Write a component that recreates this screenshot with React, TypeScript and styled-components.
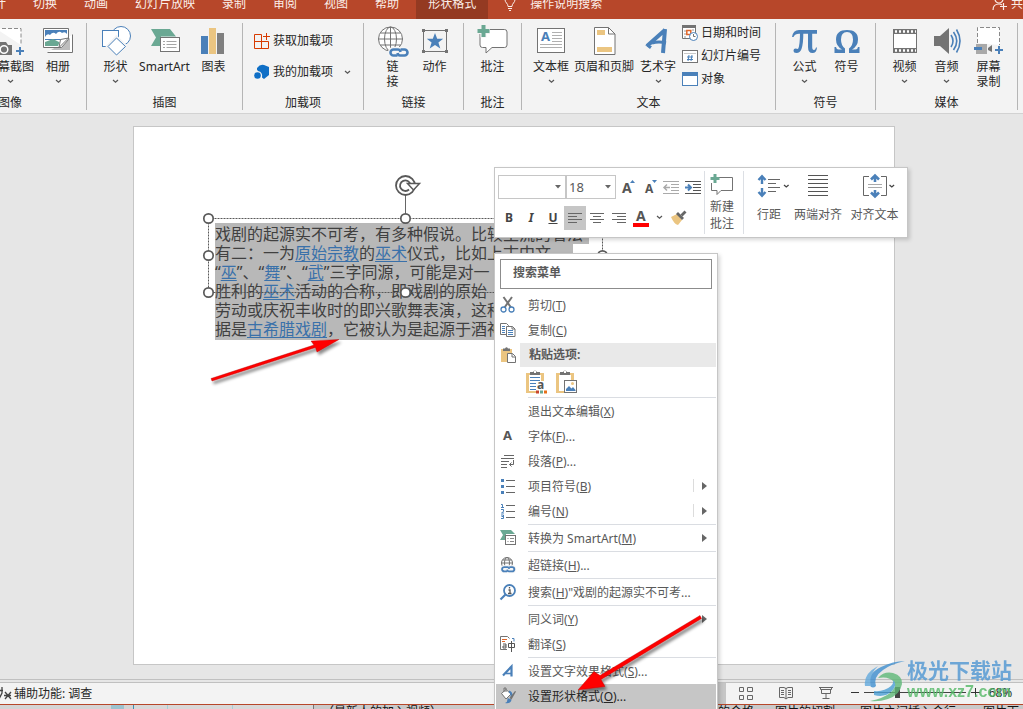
import React from "react";
import styled, { createGlobalStyle, css } from "styled-components";

const BLUE = "#4a80b9";
const GREY = "#737373";
const GREEN = "#6aa893";
const SAND = "#ebc581";

const GlobalStyle = createGlobalStyle`
  * { box-sizing: border-box; }
  body {
    margin: 0;
    overflow: hidden;
    font-family: "Noto Sans", "Noto Sans CJK SC", sans-serif;
    font-size: 12px;
    color: #262626;
  }
  button, input, select { font: inherit; color: inherit; }
  button { border: 0; padding: 0; background: none; }
  svg { display: block; flex: none; overflow: visible; }
`;

const Window = styled.div`
  position: relative;
  display: flex;
  flex-direction: column;
  height: 100vh;
  overflow: hidden;
  background: #e6e6e6;
`;

/* ---------- Tab strip ---------- */

const TabStrip = styled.nav`
  display: flex;
  align-items: flex-end;
  gap: 27px;
  height: 19px;
  flex: none;
  margin-left: -18px;
  overflow: hidden;
  white-space: nowrap;
  background: #b7472a;
`;

const Tab = styled.button<{ $active?: boolean }>`
  display: flex;
  align-items: center;
  gap: 14px;
  height: 32px;
  flex: none;
  color: #fbeee9;
  ${(p) =>
    p.$active &&
    css`
      margin: 0 -11px 0 -10px;
      padding: 0 12px;
      background: #943a22;
    `}
`;

const ShareTab = styled(Tab)`
  gap: 4px;
  margin-left: auto;
  margin-right: -12px;
`;

/* ---------- Ribbon ---------- */

const Ribbon = styled.header`
  display: flex;
  flex: none;
  padding: 4px 0 3px;
  overflow: hidden;
  background: #f3f3f3;
  border-bottom: 1px solid #d2d2d2;
`;

const GroupBox = styled.section<{ $width: number; $cut?: boolean }>`
  display: flex;
  flex-direction: column;
  flex: none;
  width: ${(p) => p.$width}px;
  margin-left: ${(p) => (p.$cut ? -66 : 0)}px;
  border-right: 1px solid #b5b5b5;
`;

const GroupBody = styled.div<{ $justify: string; $pad: number }>`
  display: flex;
  justify-content: ${(p) => p.$justify};
  height: 73px;
  padding: 2px ${(p) => p.$pad}px 0;
`;

const GroupLabel = styled.div`
  line-height: 14px;
  text-align: center;
`;

const BigButton = styled.button<{ $width: number }>`
  display: flex;
  flex-direction: column;
  align-items: center;
  flex: none;
  width: ${(p) => p.$width}px;
  line-height: 15px;
  white-space: nowrap;
`;

const BigLabel = styled.span`
  margin-top: 2px;
  white-space: pre-line;
`;

const ChevronBox = styled.span`
  display: flex;
  align-items: center;
  justify-content: center;
  height: 14px;
`;

const SmallList = styled.div<{ $row: number; $gap: number }>`
  display: flex;
  flex-direction: column;
  justify-content: flex-start;
  gap: ${(p) => p.$gap}px;
  padding-top: ${(p) => p.$row}px;
`;

const SmallButton = styled.button`
  display: flex;
  align-items: center;
  gap: 3px;
  height: 16px;
  line-height: 16px;
  white-space: nowrap;
`;

const Push = styled.span`
  margin-left: 8px;
`;

/* ---------- Slide ---------- */

const Stage = styled.main`
  display: flex;
  flex: 1;
  min-height: 0;
  padding: 12px 128px 14px 133px;
`;

const Slide = styled.article`
  position: relative;
  flex: 1;
  background: #fff;
  border: 1px solid #c6c6c6;
`;

const SlideText = styled.div`
  position: absolute;
  left: 81px;
  top: 96px;
  display: flex;
  flex-direction: column;
  align-items: flex-start;
  font-size: 16px;
  line-height: 19px;
  color: #404040;
  white-space: nowrap;
`;

const Line = styled.div<{ $width: number; $edge?: "first" | "last" }>`
  min-width: ${(p) => p.$width}px;
  padding-top: ${(p) => (p.$edge === "first" ? 2 : 0)}px;
  padding-bottom: ${(p) => (p.$edge === "last" ? 1 : 0)}px;
  background: #b8b8b8;
`;

const TextLink = styled.a`
  color: #3a71aa;
  text-decoration: underline;
  text-underline-offset: 2px;
`;

const FrameArt = styled.svg`
  position: absolute;
  left: 61px;
  top: 38px;
`;

/* ---------- Mini toolbar ---------- */

const popup = css`
  position: absolute;
  background: #fff;
  border: 1px solid #c6c6c6;
  box-shadow: 2px 2px 4px rgba(0, 0, 0, 0.16);
  color: #595959;
`;

const MiniBar = styled.div`
  ${popup};
  left: 494px;
  top: 167px;
  display: flex;
  height: 71px;
`;

const MiniLeft = styled.div`
  display: flex;
  flex-direction: column;
  gap: 7px;
  width: 209px;
  padding: 7px 3px;
`;

const MiniRow = styled.div`
  display: flex;
  height: 24px;
`;

const SelectWrap = styled.label<{ $width: number }>`
  position: relative;
  width: ${(p) => p.$width}px;
  flex: none;
  svg {
    position: absolute;
    right: 5px;
    top: 10px;
  }
`;

const Select = styled.select`
  appearance: none;
  width: 100%;
  height: 24px;
  padding: 0 2px;
  border: 1px solid #c6c6c6;
  border-radius: 0;
  background: #fff;
  font-size: 13px;
`;

const MiniButton = styled.button<{ $width?: number; $on?: boolean }>`
  display: flex;
  align-items: center;
  justify-content: center;
  flex: none;
  width: ${(p) => p.$width ?? 22}px;
  height: 24px;
  padding-bottom: 1px;
  background: ${(p) => (p.$on ? "#c6c6c6" : "transparent")};
  color: #444;
  font-weight: 700;
`;

const MiniRule = styled.span<{ $before?: number }>`
  width: 1px;
  margin: 3px 0 3px ${(p) => p.$before ?? 0}px;
  background: #dcdfe4;
`;

const MiniTall = styled.button<{ $width: number; $gap: number }>`
  display: flex;
  flex-direction: column;
  align-items: center;
  gap: ${(p) => p.$gap}px;
  width: ${(p) => p.$width}px;
  padding-top: 6px;
  line-height: 17px;
  white-space: pre;
`;

/* ---------- Context menu ---------- */

const Menu = styled.div`
  ${popup};
  left: 494px;
  top: 253px;
  width: 224px;
  padding: 5px 1px 0;
`;

const SearchBox = styled.input`
  display: block;
  width: 212px;
  height: 30px;
  margin: 0 4px 4px;
  padding: 0 12px 4px;
  border: 1px solid #8c8c8c;
  border-radius: 0;
  outline: 0;
  font-weight: 700;
  &::placeholder {
    color: #5a5a5a;
    opacity: 1;
  }
`;

const MenuItem = styled.button<{ $on?: boolean }>`
  display: grid;
  grid-template-columns: 32px 1fr auto;
  align-items: center;
  width: 100%;
  height: 25px;
  padding-bottom: 2px;
  text-align: left;
  white-space: nowrap;
  background: ${(p) => (p.$on ? "#c6c6c6" : "transparent")};
  color: ${(p) => (p.$on ? "#262626" : "#595959")};
`;

const IconSlot = styled.span`
  display: block;
  padding-left: 4px;
`;

const SubArrow = styled.span<{ $split?: boolean }>`
  display: flex;
  align-items: center;
  height: 13px;
  padding: 0 9px 0 8px;
  border-left: 1px solid ${(p) => (p.$split ? "#dcdcdc" : "transparent")};
`;

const MenuRule = styled.hr`
  height: 2px;
  margin: 0 0 0 32px;
  border: 0;
  border-top: 1px solid #dadde2;
`;

const PasteHead = styled.div`
  display: grid;
  grid-template-columns: 24px 1fr;
  align-items: center;
  height: 24px;
  font-weight: 700;
`;

const PasteTitle = styled.span`
  padding-left: 9px;
  line-height: 24px;
  background: #e9e9e9;
`;

const PasteRow = styled.div`
  display: flex;
  align-items: flex-start;
  gap: 6px;
  height: 30px;
  padding: 3px 0 0 28px;
`;

/* ---------- Status bar ---------- */

const Splitter = styled.div`
  flex: none;
  height: 4px;
  border: 1px solid #c0c0c0;
  border-width: 1px 0;
`;

const StatusBar = styled.footer`
  display: flex;
  align-items: center;
  flex: none;
  height: 22px;
  background: #f3f3f3;
  border-bottom: 1px solid #b7472a;
`;

const StatusText = styled.button`
  display: flex;
  align-items: center;
  gap: 3px;
  margin-right: auto;
  padding-bottom: 2px;
`;

const ViewButton = styled.button<{ $on?: boolean }>`
  display: flex;
  align-items: center;
  justify-content: center;
  width: 40px;
  height: 21px;
  padding-bottom: 2px;
  background: ${(p) => (p.$on ? "#c6c6c6" : "transparent")};
`;

const ZoomStep = styled.button`
  display: flex;
  align-items: center;
  justify-content: center;
  width: 18px;
  height: 21px;
  padding-bottom: 2px;
`;

const ZoomSlider = styled.input`
  appearance: none;
  width: 102px;
  height: 11px;
  margin: 0 0 2px;
  background: linear-gradient(#444, #444) center / 100% 1px no-repeat;
  &::-webkit-slider-thumb {
    appearance: none;
    width: 5px;
    height: 11px;
    background: #444;
  }
`;

const ZoomValue = styled.button`
  width: 33px;
  margin-right: 6px;
  padding-bottom: 2px;
`;

const BackWindow = styled.div`
  display: flex;
  flex: none;
  height: 4px;
  overflow: hidden;
  background: #c9c9c9;
  color: #111;
  line-height: 14px;
  white-space: nowrap;
`;

const BackPane = styled.div`
  width: 314px;
  flex: none;
  border-right: 1px solid #777;
  background: linear-gradient(90deg, #d4d4d4 111px, #9cc3cf 111px 124px, #d4d4d4 124px 133px, #3f8fb0 133px 134px,
    #d8d8d8 134px 167px, #a8ced6 167px 168px, #d8d8d8 168px 232px, #a8ced6 232px 233px, #d8d8d8 233px);
`;

const BackText = styled.span<{ $width: number }>`
  width: ${(p) => p.$width}px;
  flex: none;
  padding-left: 8px;
`;

const Annotations = styled.svg`
  position: absolute;
  left: 0;
  top: 0;
  pointer-events: none;
`;

const Watermark = styled.div`
  position: absolute;
  right: 11px;
  bottom: 6px;
  display: flex;
  align-items: center;
  gap: 1px;
  opacity: 0.8;
  pointer-events: none;
`;

const MarkText = styled.div`
  display: flex;
  flex-direction: column;
  line-height: 22px;
  font-weight: 700;
  white-space: nowrap;
`;

const MarkName = styled.span`
  font-size: 21px;
  color: #4f97d3;
`;

const MarkUrl = styled.span`
  font-family: "Liberation Sans", sans-serif;
  font-size: 16px;
  color: #55b968;
`;

/* ---------- Icons ---------- */

const Chevron = () => (
  <svg width="7" height="5" viewBox="0 0 7 5" fill="none" stroke="#555" strokeWidth="1.2">
    <path d="M1 1l2.5 2.3L6 1" />
  </svg>
);

const Triangle = () => (
  <svg width="6" height="4" viewBox="0 0 6 4">
    <path d="M0 0h6L3 3.5z" fill="#666" />
  </svg>
);

const Big = ({ children }: { children: React.ReactNode }) => (
  <svg width="32" height="32" viewBox="0 0 32 32" fill="none">
    {children}
  </svg>
);

const Small = ({ children }: { children?: React.ReactNode }) => (
  <svg width="16" height="16" viewBox="0 0 16 16" fill="none">
    {children}
  </svg>
);

const Chain = ({ x, y, s = 1 }: { x: number; y: number; s?: number }) => (
  <g transform={`translate(${x} ${y}) scale(${s})`} fill="none">
    <rect x="-1" y="-1" width="22" height="11" rx="5" fill="#f6f6f6" />
    <path d="M9 7.500H5a3 3 0 0 1 0-6h4.500q2 0 2.500 2.500" stroke={BLUE} strokeWidth="2.600" transform="translate(-.5)" />
    <path d="M11 1.500h4a3 3 0 0 1 0 6h-4.500q-2 0-2.500-2.500" stroke={BLUE} strokeWidth="2.600" transform="translate(.5)" />
  </g>
);

const Screenshot = () => (
  <Big>
    <path d="M2 3.500h25V20" stroke="#8a8a8a" strokeDasharray="4 2" fill="#fff" />
    <path d="M-1 20h5l2-3h6l2 3h4v10H-1z" fill={GREY} />
    <circle cx="10" cy="24.500" r="3.800" stroke="#fff" strokeWidth="1.500" />
    <path d="M26 22v8M22 26h8" stroke={BLUE} strokeWidth="2" />
  </Big>
);

const Album = () => (
  <Big>
    <path d="M5.500 27.500h25V9.500" stroke={GREY} fill="#fff" />
    <path d="M9 25h19V13z" fill="#bdbdbd" />
    <path d="M1.500 3.500h25v11l-7 8h-18z" fill="#fff" stroke={GREY} />
    <path d="M3 5h22v9l-4 1H3z" fill={BLUE} />
    <path d="M3 12q2-4 5-2 3-4 6-1 3-4 6-1 3-2 5 1v5H3z" fill="#fff" />
    <path d="M3 21v-4l8-3 8 4v3z" fill={GREEN} />
    <path d="M25 12.500l-6 8.500h-3l3-7z" fill="#fff" />
    <path d="M26.500 13l-8 1.500-1.500 8z" fill="#fff" stroke={GREY} />
  </Big>
);

const Shapes = () => (
  <Big>
    <circle cx="21" cy="11" r="9.500" fill="#fff" stroke={BLUE} />
    <rect x="2.500" y="5.500" width="16" height="16" fill="#fff" stroke={BLUE} />
    <path d="M16.500 12l9.500 9.500-9.500 9-9-9z" fill="#fff" stroke="#f3f3f3" strokeWidth="3" />
    <path d="M16.500 13l9 8.500-9 8.500-8.500-8.500z" fill="#fff" stroke={BLUE} />
  </Big>
);

const SmartArtBig = () => (
  <Big>
    <path d="M2 4h19l6 7.500H12V21H2l5-8.500z" fill={GREEN} />
    <rect x="11.500" y="12.500" width="19" height="14" fill="#fff" stroke={GREY} />
    <path d="M14 16.500h2M14 19.500h2M14 22.500h2M17.500 16.500h10M17.500 19.500h10M17.500 22.500h10" stroke="#a6a6a6" />
  </Big>
);

const Chart = () => (
  <Big>
    <path d="M3 11h7v18H3z" fill={BLUE} />
    <path d="M11 3h7v26h-7z" fill={SAND} />
    <path d="M19 8h7v21h-7z" fill="#7f7f7f" />
  </Big>
);

const Globe = () => (
  <Big>
    <g stroke={GREY}>
      <circle cx="13.500" cy="14" r="12" fill="#fff" />
      <ellipse cx="13.500" cy="14" rx="6" ry="12" />
      <path d="M13.500 2v24M1.500 14h24M3.500 8h20M3.500 20h20" />
    </g>
    <Chain x={12} y={23} />
  </Big>
);

const ActionIcon = () => (
  <Big>
    <rect x="4.500" y="5.500" width="23" height="21" stroke={GREY} />
    <path d="M3 4h3v3H3zM26 4h3v3h-3zM3 25h3v3H3zM26 25h3v3h-3z" fill={GREY} />
    <path d="M16 8l2.200 5.800h6l-4.800 3.700 1.900 6L16 20l-5.300 3.500 1.900-6L7.800 13.800h6z" fill={BLUE} />
  </Big>
);

const Comment = () => (
  <Big>
    <path d="M5.500 4.500h22a2.500 2.500 0 0 1 2.500 2.500v13a2.500 2.500 0 0 1-2.500 2.500H15l-6 5.500v-5.500H5.500A2.500 2.500 0 0 1 3 20V7z" fill="#fff" stroke={GREY} />
    <path d="M6.500-.500v13M0 6h13" stroke="#f3f3f3" strokeWidth="6" />
    <path d="M6.500 0v12M.500 6h12" stroke={GREEN} strokeWidth="4" />
  </Big>
);

const TextBoxIcon = () => (
  <Big>
    <rect x="2.500" y="3.500" width="27" height="24" fill="#fff" stroke={GREY} />
    <path d="M17 7.500h10M17 10.500h10M17 13.500h10M17 16.500h10M5 19.500h22M5 22.500h22" stroke="#b0b0b0" />
    <text x="6" y="16" fontSize="13" fontWeight="700" fill={BLUE}>A</text>
  </Big>
);

const HeaderFooter = () => (
  <Big>
    <path d="M6.500 2.500h14l6.500 6.500v20.500H6.500z" fill="#fff" stroke={GREY} />
    <path d="M20.500 2.500V9H27" stroke={GREY} />
    <path d="M9 5h8v5H9zM9 22h15v5H9z" fill={SAND} />
  </Big>
);

const WordArt = () => (
  <Big>
    <path d="M5 21L23 5M23 4l-2 24" stroke={BLUE} strokeWidth="4" />
    <path d="M10 18q7-2 14 0" stroke={BLUE} strokeWidth="3" />
    <path d="M3 20l7 1-2 3z" fill={BLUE} />
  </Big>
);

const Pi = () => (
  <Big>
    <path d="M3 12q1-7 7-7h18v3.800H10q-4 0-5.500 3.200z" fill={BLUE} />
    <path d="M11 7h3.300q.2 11-1.800 17-1.500 4-5 4-3 0-3-2.500 0-2 2-2 1.500 0 2.500.500Q11 21 11 7zM19 7h4.200v15q0 3 1.800 3 1.300 0 2-2.500h1q-.5 5.500-4.500 5.500-4.500 0-4.500-6z" fill={BLUE} />
  </Big>
);

const Omega = () => (
  <Big>
    <path d="M3.500 22H5q.5 2.500 2.500 2.500H11Q5 21 5 14.500 5 5 16 5t11 9.500q0 6.500-6 10h3.500q2 0 2.500-2.500h1.500V28H18v-4.500q4-3 4-9Q22 7 16 7t-6 7.500q0 6 4 9V28H3.500z" fill={BLUE} />
  </Big>
);

const Film = () => (
  <Big>
    <path d="M4 4h24v24H4z" fill={GREY} />
    <path d="M5 9h22v14H5z" fill="#fff" />
    <path d="M6 6.500h21M6 25.500h21" stroke="#fff" strokeWidth="2.500" strokeDasharray="2 2" />
  </Big>
);

const Speaker = () => (
  <Big>
    <path d="M3 11h6l9-8v26l-9-8H3z" fill={GREY} />
    <path d="M20 10q4 6 0 12M22.500 7q6.500 9 0 18M25.500 4.500q7 11.500 0 23" stroke={BLUE} strokeWidth="1.600" />
  </Big>
);

const ScreenRecord = () => (
  <Big>
    <path d="M4.500 18V2.500h22V20" fill="#fff" stroke="#8a8a8a" strokeDasharray="4 2" />
    <path d="M3 19h11v10H3z" fill="#a9a9a9" />
    <path d="M15 23l4-3v7l-4-2z" fill={GREY} />
    <path d="M1 22h8v3H1z" fill={BLUE} />
    <path d="M26 21v8M22 25h8" stroke={BLUE} strokeWidth="2" />
  </Big>
);

const GetAddins = () => (
  <Small>
    <path d="M7.500 1.500h-7v14h14v-7H.500M7.500 1.500v14" stroke="#d83b01" />
    <path d="M12.500 0v7M9 3.500h7" stroke="#d83b01" />
  </Small>
);

const MyAddins = () => (
  <Small>
    <path d="M3 4q3-4 7-3l5 2v8l-5 4-2-1.500Q9 8 4 7 2.500 6 3 4z" fill="#0f6fc6" />
    <circle cx="3.500" cy="11.500" r="3.300" fill="#0f6fc6" />
  </Small>
);

const DateIcon = () => (
  <Small>
    <path d="M.500.500h13v13H.500z" fill="#fff" stroke={GREY} />
    <path d="M0 0h14v3H0z" fill={GREY} />
    <path d="M2 6h2M2 9h2M2 12h2M10 5h2" stroke="#999" />
    <rect x="4.800" y="5.500" width="4" height="4" stroke="#e0662a" strokeWidth="1.500" />
    <circle cx="11.500" cy="11.500" r="4" fill="#fff" stroke={BLUE} />
    <path d="M11.500 9v2.500h2" stroke={GREY} />
  </Small>
);

const SlideNo = () => (
  <Small>
    <rect x=".5" y="2.500" width="15" height="12" fill="#fff" stroke={GREY} />
    <path d="M2 5.500h12" stroke="#c9c9c9" strokeWidth="1" />
    <path d="M7 7l-1 6M10 7l-1 6M5 9h6M5 11.500h6" stroke={BLUE} />
  </Small>
);

const ObjectIcon = () => (
  <Small>
    <rect x=".5" y="1.500" width="15" height="13" fill="#fff" stroke={BLUE} />
    <path d="M0 1h16v4H0z" fill={BLUE} />
  </Small>
);

const Bulb = () => (
  <svg width="12" height="16" viewBox="0 0 12 16" fill="none" stroke="#fbeee9">
    <path d="M4 11.500q0-2-1.500-3.500A5 5 0 1 1 9.500 8Q8 9.500 8 11.500zM4 13.500h4M5 15.500h2" />
  </svg>
);

const Person = () => (
  <svg width="15" height="16" viewBox="0 0 15 16" fill="none" stroke="#fbeee9" strokeWidth="1.200">
    <circle cx="7" cy="4" r="4" />
    <path d="M1 15q0-6 6-6 2 0 3 1M11.500 8v7M8 11.500h7" />
  </svg>
);

const alignRows: Record<string, string> = {
  left: "M1 3.500h14M1 6.500h9M1 9.500h14M1 12.500h9",
  center: "M1 3.500h14M4 6.500h8M1 9.500h14M4 12.500h8",
  right: "M1 3.500h14M6 6.500h9M1 9.500h14M6 12.500h9",
};

const Align = ({ kind }: { kind: string }) => (
  <Small>
    <path d={alignRows[kind]} stroke="#666" />
  </Small>
);

const Indent = ({ out }: { out?: boolean }) => {
  const line = out ? "#aaa" : "#555";
  return (
    <Small>
      <path d="M0 2.500h16M8 5.500h8M8 8.500h8M8 11.500h8M0 14.500h16" stroke={line} />
      {out ? (
        <path d="M7 8.500H1M4 5.500l-3 3 3 3" stroke="#aaa" strokeWidth="1.500" />
      ) : (
        <path d="M0 8.500h6M3 5.500l3 3-3 3" stroke={BLUE} strokeWidth="2" />
      )}
    </Small>
  );
};

const FontSize = ({ up }: { up?: boolean }) => (
  <svg width="16" height="18" viewBox="0 0 16 18">
    <text x={up ? 3 : 4} y="15" fontSize={up ? 14 : 12} fontWeight="700" fill="#555">A</text>
    <path d={up ? "M11 5h5l-2.500-3z" : "M11 2h5l-2.500 3z"} fill={BLUE} />
  </svg>
);

const FontColor = () => (
  <svg width="16" height="20" viewBox="0 0 16 20">
    <text x="3" y="13" fontSize="14" fontWeight="700" fill="#555">A</text>
    <path d="M0 15h16v4H0z" fill="#f00" />
  </svg>
);

const Brush = () => (
  <Small>
    <path d="M0 7l6-3 5 6-4 5q-4-1-7-8z" fill={SAND} />
    <path d="M5 4l2-2 6 6-2 2z" fill="#666" />
    <path d="M9.500 4.500L13.500.500l2 2-4 4z" fill="#666" />
  </Small>
);

const MiniComment = () => (
  <svg width="24" height="24" viewBox="0 0 24 24" fill="none">
    <path d="M9 3.500h13.500v13H11l-4 4v-4H1.500V9" stroke={GREY} />
    <path d="M5 0v9M.500 4.500h9" stroke={GREEN} strokeWidth="3" />
  </svg>
);

const LineSpacing = () => (
  <svg width="40" height="24" viewBox="0 0 40 24" fill="none">
    <path d="M13 3v7M13 14v7M9.500 6L13 2.200 16.500 6M9.500 18l3.500 3.800 3.500-3.800" stroke={BLUE} strokeWidth="2.400" />
    <path d="M19 5.500h12M19 9.500h8M19 13.500h12M19 17.500h8" stroke="#666" />
    <path d="M35 11l2.300 2 2.300-2" stroke="#444" strokeWidth="1.300" />
  </svg>
);

const Justify = () => (
  <svg width="20" height="24" viewBox="0 0 20 24">
    <path d="M0 1.500h20M0 5.500h20M0 9.500h20M0 13.500h20M0 17.500h20M0 21.500h20" stroke="#555" />
  </svg>
);

const AlignText = () => (
  <svg width="40" height="24" viewBox="0 0 40 24" fill="none">
    <path d="M14 2.500H8.500v19H14M26 2.500h5.500v19H26" stroke="#666" />
    <path d="M13 10.500h14M13 13.500h14" stroke="#aaa" />
    <path d="M20 1v7M20 16v7M16 5.500L20 1.500l4 4M16 18.500l4 4 4-4" stroke={BLUE} strokeWidth="2.600" />
    <path d="M34.500 11l2.300 2 2.300-2" stroke="#444" strokeWidth="1.300" />
  </svg>
);

const Scissors = () => (
  <Small>
    <path d="M3.500 0L11 10.500M12 0L4.500 10.500" stroke={GREY} strokeWidth="2" />
    <circle cx="3.500" cy="12.500" r="2.500" stroke={BLUE} strokeWidth="1.300" />
    <circle cx="11.500" cy="12.500" r="2.500" stroke={BLUE} strokeWidth="1.300" />
  </Small>
);

const Copy = () => (
  <Small>
    <path d="M.500 1.500h6l2 2v9h-8z" fill="#fff" stroke={GREY} />
    <path d="M2 4.500h3M2 6.500h3M2 8.500h3M2 10.500h3" stroke={BLUE} />
    <path d="M6.500 4.500h6l2.500 2.500v7.500H6.500z" fill="#fff" stroke={GREY} />
    <path d="M12 4.500V7h3" stroke={GREY} />
    <path d="M8 8.500h5M8 10.500h5M8 12.500h5" stroke={BLUE} />
  </Small>
);

const Clipboard = () => (
  <Small>
    <path d="M1 2h11v13H1z" fill={SAND} />
    <path d="M3 1.500h2q1.500-2.500 3 0h2V4H3z" fill={GREY} />
    <path d="M7.500 6.500h5l3 3v6h-8z" fill="#fff" stroke={GREY} />
    <path d="M12 6.500V10h3.500" stroke={GREY} />
  </Small>
);

const PasteBoard = ({ children }: { children: React.ReactNode }) => (
  <svg width="24" height="24" viewBox="0 0 24 24" fill="none">
    <path d="M2 3h18v20H2z" fill={SAND} />
    <path d="M5 5h12v16H5z" fill="#fff" />
    <path d="M6 2h3q2-3 4 0h3v3H6z" fill={GREY} />
    <rect x="10" y="1" width="2" height="2" fill="#fff" />
    {children}
  </svg>
);

const PasteTheme = () => (
  <PasteBoard>
    <path d="M6 7.500h10M6 10.500h10M6 13.500h6M6 16.500h6M6 19.500h6" stroke={BLUE} />
    <path d="M12 11h12v13H12z" fill="#fff" />
    <text x="13" y="19" fontSize="12" fontWeight="700" fill="#555">a</text>
    <path d="M12 20.500h3v3h-3z" fill="#c8452b" />
    <path d="M16 20.500h3v3h-3z" fill={GREEN} />
    <path d="M20 20.500h3v3h-3z" fill="#e8701a" />
  </PasteBoard>
);

const PastePicture = () => (
  <PasteBoard>
    <rect x="10.500" y="10.500" width="12" height="12" fill="#fff" stroke={GREY} />
    <path d="M12 21v-2l3-3 2.500 2.500 1.500-1.500 2.500 3v1z" fill={BLUE} />
    <circle cx="18.500" cy="13.500" r="1.500" fill={SAND} />
  </PasteBoard>
);

const FontIcon = () => (
  <Small>
    <text x="3" y="12" fontSize="13" fontWeight="700" fill="#555">A</text>
  </Small>
);

const Paragraph = () => (
  <Small>
    <path d="M4 2.500h10M1 5.500h13M1 8.500h8M1 11.500h6M1 14.500h6M13.500 7v4.500H9.500M11.500 9.500l-2 2 2 2" stroke="#666" />
  </Small>
);

const Bullets = () => (
  <Small>
    <path d="M6 2.500h9M6 8.500h9M6 14.500h9" stroke="#666" />
    <path d="M1 1h3v3H1zM1 7h3v3H1zM1 13h3v3H1z" fill={BLUE} />
  </Small>
);

const Numbering = () => (
  <Small>
    <path d="M6 2.500h9M6 8.500h9M6 14.500h9" stroke="#666" />
    <path d="M1 1.500h1.500V5M1 4.500h3M1 6.500h2.500v2l-2 1.500h2.500M1 12h2.500v3.500H1M1.500 13.500h2" stroke={BLUE} />
  </Small>
);

const SmartArtSmall = () => (
  <Small>
    <path d="M0 0h11l4 4H6v6H0l3-5z" fill={GREEN} />
    <rect x="5.500" y="5.500" width="10" height="9" fill="#fff" stroke={GREY} />
    <path d="M7.500 8.500h1M7.500 11.500h1M10 8.500h4M10 11.500h4" stroke="#888" />
  </Small>
);

const LinkSmall = () => (
  <Small>
    <g stroke={GREY}>
      <circle cx="7" cy="6" r="5.500" />
      <ellipse cx="7" cy="6" rx="2.500" ry="5.500" />
      <path d="M1.500 6h11M2.500 3h9" />
    </g>
    <Chain x={1} y={9} s={0.72} />
  </Small>
);

const SmartLookup = () => (
  <Small>
    <circle cx="9.500" cy="6.500" r="5.500" stroke={BLUE} strokeWidth="1.800" />
    <path d="M5.500 10.500L.500 15.500" stroke={BLUE} strokeWidth="2.200" />
    <path d="M9.500 3v1.500M8.500 6h1.500v4M8 9.500h3.500" stroke="#555" strokeWidth="1.300" />
  </Small>
);

const Translate = () => (
  <Small>
    <path d="M7 13.500H.500v-13h7l2 2" stroke={GREY} />
    <path d="M2 3.500h5M2 5.500h3" stroke="#e0662a" />
    <path d="M3 8h3v4H3v-2h3" stroke="#555" />
    <path d="M8.500 7.500h6v4h-6zM11.500 5v11" stroke="#555" />
    <path d="M12 2.500h2v3" stroke={BLUE} />
  </Small>
);

const TextEffect = () => (
  <Small>
    <path d="M3 12.500L11.500 3.500v10" stroke={BLUE} strokeWidth="2.200" />
    <path d="M6 10.500h6" stroke={BLUE} strokeWidth="1.600" />
  </Small>
);

const FormatShape = () => (
  <Small>
    <path d="M5 15q3-1 2.500-5l4 1.500q-.5 4.500-6.500 3.500z" fill={BLUE} />
    <path d="M1.500 5.500L6 1.500l5 4.500-5 5z" fill="#fff" stroke={GREY} />
    <path d="M4 4V0h2v4" stroke={GREY} />
    <path d="M9 3.500q3 1 2.500 5.500" stroke={BLUE} strokeWidth="2" />
    <path d="M16 3.500l-4.500 8-2-1.500 5.500-7z" fill={GREY} />
  </Small>
);

const Accessibility = () => (
  <svg width="11" height="14" viewBox="0 0 11 14" fill="none" stroke="#444">
    <path d="M-1 4.500h4M2 1v6L-1 13M5 6l6 7M11 6l-6 7M4 9.500h7" strokeWidth="1.300" />
  </svg>
);

/* ---------- Parts ---------- */

type BigSpec = { label: string; icon: React.ReactNode; width: number; menu?: boolean };

const Group = ({
  title,
  width,
  items = [],
  justify = "center",
  pad = 0,
  cut,
  children,
}: {
  title: string;
  width: number;
  items?: BigSpec[];
  justify?: string;
  pad?: number;
  cut?: boolean;
  children?: React.ReactNode;
}) => (
  <GroupBox $width={width} $cut={cut}>
    <GroupBody $justify={justify} $pad={pad}>
      {items.map((item) => (
        <BigButton key={item.label} $width={item.width}>
          {item.icon}
          <BigLabel>{item.label}</BigLabel>
          {item.menu && (
            <ChevronBox>
              <Chevron />
            </ChevronBox>
          )}
        </BigButton>
      ))}
      {children}
    </GroupBody>
    <GroupLabel>{title}</GroupLabel>
  </GroupBox>
);

const Item = ({
  icon,
  text,
  accel,
  tail = "",
  sub,
  on,
}: {
  icon?: React.ReactNode;
  text: string;
  accel: string;
  tail?: string;
  sub?: "plain" | "split";
  on?: boolean;
}) => (
  <MenuItem $on={on}>
    <IconSlot>{icon}</IconSlot>
    <span>
      {text}(<u>{accel}</u>){tail}
    </span>
    {sub && (
      <SubArrow $split={sub === "split"}>
        <svg width="5" height="8" viewBox="0 0 5 8">
          <path d="M0 0l5 4-5 4z" fill="#666" />
        </svg>
      </SubArrow>
    )}
  </MenuItem>
);

const handles = [
  [208, 218],
  [405, 218],
  [602, 218],
  [208, 255],
  [602, 255],
  [208, 292],
  [405, 292],
  [602, 292],
];

export default function App() {
  return (
    <Window>
      <GlobalStyle />
      <TabStrip>
        {["设计", "切换", "动画", "幻灯片放映", "录制", "审阅", "视图", "帮助"].map((t) => (
          <Tab key={t}>{t}</Tab>
        ))}
        <Tab $active>形状格式</Tab>
        <Tab>
          <Bulb />
          操作说明搜索
        </Tab>
        <ShareTab>
          <Person />
          共享
        </ShareTab>
      </TabStrip>

      <Ribbon>
        <Group
          title="图像"
          width={153}
          justify="flex-end"
          pad={4}
          cut
          items={[
            { label: "屏幕截图", icon: <Screenshot />, width: 48, menu: true },
            { label: "相册", icon: <Album />, width: 48, menu: true },
          ]}
        />
        <Group
          title="插图"
          width={156}
          items={[
            { label: "形状", icon: <Shapes />, width: 46, menu: true },
            { label: "SmartArt", icon: <SmartArtBig />, width: 52 },
            { label: "图表", icon: <Chart />, width: 46 },
          ]}
        />
        <Group title="加载项" width={121} justify="flex-start" pad={11}>
          <SmallList $row={8} $gap={15}>
            <SmallButton>
              <GetAddins />
              获取加载项
            </SmallButton>
            <SmallButton>
              <MyAddins />
              我的加载项
              <Push>
                <Chevron />
              </Push>
            </SmallButton>
          </SmallList>
        </Group>
        <Group
          title="链接"
          width={100}
          items={[
            { label: "链\n接", icon: <Globe />, width: 42 },
            { label: "动作", icon: <ActionIcon />, width: 42 },
          ]}
        />
        <Group title="批注" width={58} items={[{ label: "批注", icon: <Comment />, width: 42 }]} />
        <Group
          title="文本"
          width={254}
          justify="flex-start"
          pad={6}
          items={[
            { label: "文本框", icon: <TextBoxIcon />, width: 46, menu: true },
            { label: "页眉和页脚", icon: <HeaderFooter />, width: 60 },
            { label: "艺术字", icon: <WordArt />, width: 48, menu: true },
          ]}
        >
          <SmallList $row={0} $gap={7}>
            <SmallButton>
              <DateIcon />
              日期和时间
            </SmallButton>
            <SmallButton>
              <SlideNo />
              幻灯片编号
            </SmallButton>
            <SmallButton>
              <ObjectIcon />
              对象
            </SmallButton>
          </SmallList>
        </Group>
        <Group
          title="符号"
          width={100}
          items={[
            { label: "公式", icon: <Pi />, width: 42, menu: true },
            { label: "符号", icon: <Omega />, width: 42 },
          ]}
        />
        <Group
          title="媒体"
          width={142}
          items={[
            { label: "视频", icon: <Film />, width: 42, menu: true },
            { label: "音频", icon: <Speaker />, width: 42, menu: true },
            { label: "屏幕\n录制", icon: <ScreenRecord />, width: 42 },
          ]}
        />
      </Ribbon>

      <Stage>
        <Slide>
          <SlideText>
            <Line $width={374} $edge="first">戏剧的起源实不可考，有多种假说。比较主流的看法</Line>
            <Line $width={358}>
              有二：一为<TextLink href="#yszj">原始宗教</TextLink>的<TextLink href="#ws">巫术</TextLink>
              仪式，比如上古中文
            </Line>
            <Line $width={374}>
              “<TextLink href="#wu">巫</TextLink>”、“<TextLink href="#dance">舞</TextLink>”、“
              <TextLink href="#martial">武</TextLink>”三字同源，可能是对一
            </Line>
            <Line $width={374}>
              胜利的<TextLink href="#ws2">巫术</TextLink>活动的合称，即戏剧的原始
            </Line>
            <Line $width={374}>劳动或庆祝丰收时的即兴歌舞表演，这种</Line>
            <Line $width={374} $edge="last">
              据是<TextLink href="#greek">古希腊戏剧</TextLink>，它被认为是起源于酒神
            </Line>
          </SlideText>
          <FrameArt width="420" height="150" viewBox="195 165 420 150" fill="none">
            <rect x="208.500" y="218.500" width="394" height="74" stroke="#595959" strokeDasharray="2 1" />
            <path d="M405.500 193v21" stroke="#666" />
            {handles.map(([x, y]) => (
              <circle key={`${x}-${y}`} cx={x + 0.5} cy={y + 0.5} r="4.700" fill="#fff" stroke="#595959" strokeWidth="1.700" />
            ))}
            <circle cx="405.500" cy="185.500" r="9.500" fill="#fff" stroke="#595959" strokeWidth="1.800" />
            <path d="M409 189.500a5.300 5.300 0 1 1 1.500-5" stroke="#595959" strokeWidth="1.800" />
            <path d="M407.500 183.500h12l-6 6.500z" fill="#fff" stroke="#595959" strokeWidth="1.500" />
          </FrameArt>
        </Slide>
      </Stage>

      <Splitter />
      <StatusBar>
        <StatusText>
          <Accessibility />
          辅助功能: 调查
        </StatusText>
        <ViewButton $on aria-label="普通视图" />
        <ViewButton aria-label="幻灯片浏览">
          <svg width="14" height="14" viewBox="0 0 14 14" fill="none" stroke="#666">
            <path d="M.500 1.500h4v4h-4zM8.500 1.500h5v4h-5zM.500 9.500h4v4h-4zM8.500 9.500h5v4h-5z" />
          </svg>
        </ViewButton>
        <ViewButton aria-label="阅读视图">
          <svg width="14" height="14" viewBox="0 0 14 14" fill="none" stroke="#666">
            <path d="M.500 1.500h4.500l2 1 2-1h4.500v10H9l-2 1.500-2-1.500H.500zM7 2v11M2 4.500h3M2 6.500h3M2 8.500h3M9 4.500h3M9 6.500h3M9 8.500h3" />
          </svg>
        </ViewButton>
        <ViewButton aria-label="幻灯片放映">
          <svg width="14" height="14" viewBox="0 0 14 14" fill="none" stroke="#666">
            <path d="M0 1.500h14M1.500 1.500v2h11v-2M2.500 3.500v4h9v-4M7 7.500v5M3.500 12.500h7" />
          </svg>
        </ViewButton>
        <ZoomStep aria-label="缩小">
          <svg width="8" height="9" viewBox="0 0 8 9" stroke="#333">
            <path d="M0 4.500h8" />
          </svg>
        </ZoomStep>
        <ZoomSlider type="range" min={0} max={100} defaultValue={32} aria-label="缩放" />
        <ZoomStep aria-label="放大">
          <svg width="9" height="9" viewBox="0 0 9 9" stroke="#333">
            <path d="M0 4.500h9M4.500 0v9" />
          </svg>
        </ZoomStep>
        <ZoomValue>68%</ZoomValue>
      </StatusBar>
      <BackWindow>
        <BackPane />
        <BackText $width={396}>（最新人的加入视频）</BackText>
        <BackText $width={57}>的合格</BackText>
        <BackText $width={85}>图片的切割</BackText>
        <BackText $width={123}>图片之间插入合行</BackText>
        <BackText $width={60}>图片下</BackText>
      </BackWindow>

      <MiniBar>
        <MiniLeft>
          <MiniRow>
            <SelectWrap $width={68}>
              <Select aria-label="字体" defaultValue="">
                <option value="" />
              </Select>
              <Triangle />
            </SelectWrap>
            <SelectWrap $width={50}>
              <Select aria-label="字号" defaultValue="18">
                <option>18</option>
              </Select>
              <Triangle />
            </SelectWrap>
            <MiniButton aria-label="增大字号"><FontSize up /></MiniButton>
            <MiniButton aria-label="减小字号"><FontSize /></MiniButton>
            <MiniButton aria-label="减少缩进"><Indent out /></MiniButton>
            <MiniButton aria-label="增加缩进"><Indent /></MiniButton>
          </MiniRow>
          <MiniRow>
            <MiniButton>B</MiniButton>
            <MiniButton><i>I</i></MiniButton>
            <MiniButton><u>U</u></MiniButton>
            <MiniButton $on aria-label="左对齐"><Align kind="left" /></MiniButton>
            <MiniButton aria-label="居中"><Align kind="center" /></MiniButton>
            <MiniButton aria-label="右对齐"><Align kind="right" /></MiniButton>
            <MiniButton aria-label="字体颜色"><FontColor /></MiniButton>
            <MiniButton $width={14} aria-label="更多颜色"><Chevron /></MiniButton>
            <MiniButton $width={26} aria-label="格式刷"><Brush /></MiniButton>
          </MiniRow>
        </MiniLeft>
        <MiniRule />
        <MiniTall $width={34} $gap={0}>
          <MiniComment />
          <span>{"新建\n批注"}</span>
        </MiniTall>
        <MiniRule $before={4} />
        <MiniTall $width={50} $gap={8}>
          <LineSpacing />
          <span>行距</span>
        </MiniTall>
        <MiniTall $width={48} $gap={8}>
          <Justify />
          <span>两端对齐</span>
        </MiniTall>
        <MiniTall $width={65} $gap={8}>
          <AlignText />
          <span>对齐文本</span>
        </MiniTall>
      </MiniBar>

      <Menu>
        <SearchBox placeholder="搜索菜单" aria-label="搜索菜单" />
        <Item icon={<Scissors />} text="剪切" accel="T" />
        <Item icon={<Copy />} text="复制" accel="C" />
        <PasteHead>
          <IconSlot>
            <Clipboard />
          </IconSlot>
          <PasteTitle>粘贴选项:</PasteTitle>
        </PasteHead>
        <PasteRow>
          <button aria-label="使用目标主题"><PasteTheme /></button>
          <button aria-label="图片"><PastePicture /></button>
        </PasteRow>
        <MenuRule />
        <Item text="退出文本编辑" accel="X" />
        <Item icon={<FontIcon />} text="字体" accel="F" tail="..." />
        <Item icon={<Paragraph />} text="段落" accel="P" tail="..." />
        <Item icon={<Bullets />} text="项目符号" accel="B" sub="split" />
        <Item icon={<Numbering />} text="编号" accel="N" sub="split" />
        <MenuRule />
        <Item icon={<SmartArtSmall />} text="转换为 SmartArt" accel="M" sub="plain" />
        <MenuRule />
        <Item icon={<LinkSmall />} text="超链接" accel="H" tail="..." />
        <MenuRule />
        <Item icon={<SmartLookup />} text="搜索" accel="H" tail={'"戏剧的起源实不可考...'} />
        <MenuRule />
        <Item text="同义词" accel="Y" sub="plain" />
        <Item icon={<Translate />} text="翻译" accel="S" />
        <MenuRule />
        <Item icon={<TextEffect />} text="设置文字效果格式" accel="S" tail="..." />
        <Item icon={<FormatShape />} text="设置形状格式" accel="O" tail="..." on />
      </Menu>

      <Annotations width="720" height="700" viewBox="0 0 720 700">
        <defs>
          <filter id="soft" x="-20%" y="-50%" width="140%" height="200%">
            <feDropShadow dx="2" dy="3" stdDeviation="1.500" floodOpacity="0.45" />
          </filter>
        </defs>
        <g filter="url(#soft)" fill="#f00" stroke="#b01010" strokeWidth="0.400">
          <path d="M211 378.500L314 345l-3-4 28-1.500-22 12.500-1.500-4.500L212 381z" />
          <path d="M700 615.500L600 675.500l-6-4L578 690l27-3.500-4-7L701.500 618.500z" />
        </g>
      </Annotations>

      <Watermark>
        <svg width="42" height="42" viewBox="0 0 42 42" fill="none">
          <path d="M5 24Q3 14 17 7 29 1 41 1 27 4 19 10 9 17 12 26 8 30 5 24z" fill="#3f8fd0" />
          <path d="M1 26Q-1 14 14 6 4 16 7 26z" fill="#62a9dd" />
          <path d="M14 18q6-7 15-5 10 3 9 11-2 11-14 15-9 3-18 2 14-3 20-8 7-6 4-11-5-6-16-4z" fill="#5fb878" />
          <path d="M10 31q10 1 17-5 3-3 2-6 5 4-1 11-7 7-18 4z" fill="#4a9fd5" />
        </svg>
        <MarkText>
          <MarkName>极光下载站</MarkName>
          <MarkUrl>www.xz7.com</MarkUrl>
        </MarkText>
      </Watermark>
    </Window>
  );
}
